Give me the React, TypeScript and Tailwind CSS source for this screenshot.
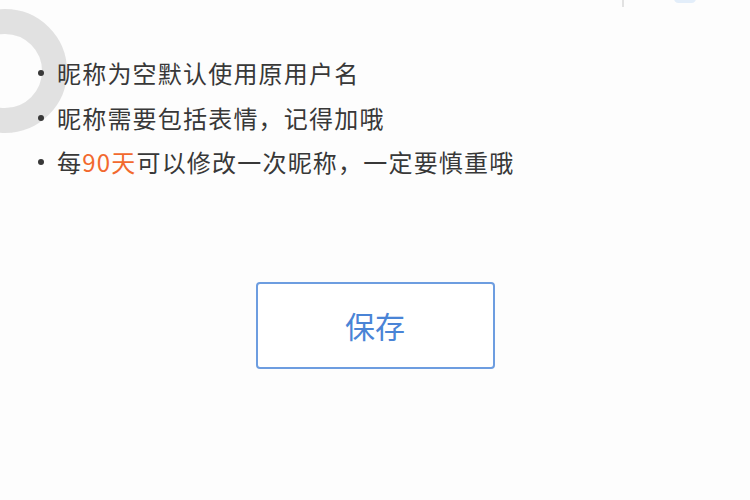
const tips = [
	<>昵称为空默认使用原用户名</>,
	<>昵称需要包括表情，记得加哦</>,
	<>
		每<span className="text-[#f2692e]">90天</span>可以修改一次昵称，一定要慎重哦
	</>
];

export default function App() {
	return (
		<div
			className="relative h-[500px] w-[750px] overflow-hidden bg-[#fdfdfd]"
			style={{ fontFamily: '"Noto Sans CJK SC", "Noto Sans", sans-serif' }}
		>
			{/* loading ring */}
			<div className="absolute left-[-57px] top-[9px] h-[124px] w-[124px] rounded-full border-[25px] border-[#dedede]/90" />

			{/* top bar remnant */}
			<div className="absolute left-[622px] top-0 h-[7px] w-[2px] bg-[#e2e2e2]" />
			<div className="absolute left-[674px] top-[-6px] h-[9px] w-[22px] rounded-full bg-[#e3eefa]" />

			<ul className="relative pl-[38px] pt-[51px]">
				{tips.map((tip, i) => (
					<li
						key={i}
						className="flex items-center text-[24px] leading-[44.5px] tracking-[1.2px] text-[#383838]"
					>
						<span className="mr-[13px] h-[6px] w-[6px] rounded-full bg-[#383838]" />
						<span>{tip}</span>
					</li>
				))}
			</ul>

			<div className="mt-[97px] flex justify-center">
				<button className="flex h-[87px] w-[239px] items-center justify-center rounded-[4px] border-2 border-[#6d9de0] bg-white text-[30px] text-[#4a84d6]">
					保存
				</button>
			</div>
		</div>
	);
}
